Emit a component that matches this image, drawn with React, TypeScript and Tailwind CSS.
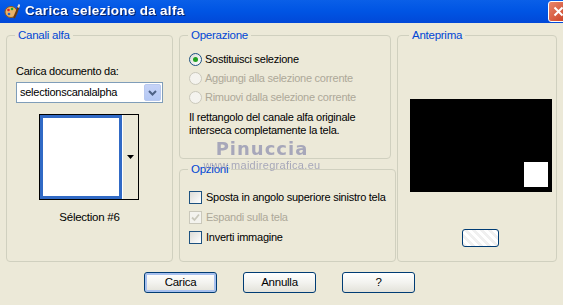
import type { ReactNode } from 'react';

const font = { fontFamily: '"Liberation Sans", Arial, sans-serif' };

function Group({ title, className, children }: { title: string; className?: string; children: ReactNode }) {
  return (
    <fieldset className={`border border-[#d0d0bf] rounded-[4px] px-[9px] ${className ?? ''}`}>
      <legend className="px-[3px] text-[#0046d5] text-[11.5px] leading-[13px] ml-[-1px]">{title}</legend>
      {children}
    </fieldset>
  );
}

function Radio({ label, checked, disabled }: { label: string; checked?: boolean; disabled?: boolean }) {
  return (
    <div className="flex items-center gap-[3px] h-[19px] whitespace-nowrap">
      <span
        className={`w-[13px] h-[13px] shrink-0 rounded-full border flex items-center justify-center ${
          disabled ? 'border-[#cac8bb] bg-[#f4f3ee]' : 'border-[#1c5180] bg-gradient-to-br from-[#dcdcd7] to-white'
        }`}
      >
        {checked && <span className="w-[5px] h-[5px] rounded-full bg-[#21a121]" />}
      </span>
      <span className={disabled ? 'text-[#aca899]' : 'text-black'}>{label}</span>
    </div>
  );
}

function Check({ label, checked, disabled }: { label: string; checked?: boolean; disabled?: boolean }) {
  return (
    <div className="flex items-center gap-[4px] h-[20px] whitespace-nowrap">
      <span
        className={`w-[13px] h-[13px] shrink-0 border flex items-center justify-center ${
          disabled ? 'border-[#cac8bb] bg-[#f4f3ee]' : 'border-[#1c5180] bg-gradient-to-br from-[#dcdcd7] to-white'
        }`}
      >
        {checked && (
          <svg width="9" height="9" viewBox="0 0 9 9">
            <path d="M1 4.5 L3.5 7 L8 1.5" fill="none" stroke="#cac8bb" strokeWidth="1.8" />
          </svg>
        )}
      </span>
      <span className={disabled ? 'text-[#aca899]' : 'text-black'}>{label}</span>
    </div>
  );
}

function Btn({ children, focused }: { children: ReactNode; focused?: boolean }) {
  return (
    <button
      className={`w-[73px] h-[21px] rounded-[3px] border border-[#003c74] bg-gradient-to-b from-white via-[#f3f3ef] to-[#e3e2da] text-[11.5px] text-black ${
        focused ? 'shadow-[inset_0_0_0_2px_#a7c0ee]' : ''
      }`}
    >
      {children}
    </button>
  );
}

export default function App() {
  return (
    <div className="w-[563px] h-[305px] bg-[#ece9d8] overflow-hidden text-[11px] tracking-[-0.25px] relative" style={font}>
      {/* Title bar */}
      <div className="h-[23px] bg-gradient-to-b from-[#0a5fe8] via-[#0054e3] to-[#0148d8] flex items-center pl-[4px] relative">
        <svg width="16" height="16" viewBox="0 0 16 16" className="mr-[5px]">
          <ellipse cx="7" cy="8" rx="6" ry="5.5" fill="#e9b36a" stroke="#8a5a1e" strokeWidth="1" />
          <circle cx="4.5" cy="6" r="1.3" fill="#d22" />
          <circle cx="8" cy="5" r="1.3" fill="#2a2" />
          <circle cx="5" cy="10" r="1.3" fill="#26c" />
          <path d="M10 14 L15 2" stroke="#6b3a12" strokeWidth="2" />
          <path d="M14.2 3.5 L15.5 0.5" stroke="#ddd" strokeWidth="2" />
        </svg>
        <span className="text-white font-bold text-[13.5px] tracking-[0.3px] drop-shadow-[1px_1px_0_#0a246a]">
          Carica selezione da alfa
        </span>
        <div className="absolute right-[-6px] top-[1px] w-[21px] h-[21px] rounded-[3px] border border-white bg-gradient-to-br from-[#e8856b] to-[#c8391b] flex items-center justify-center">
          <svg width="11" height="11" viewBox="0 0 11 11">
            <path d="M1.5 1.5 L9.5 9.5 M9.5 1.5 L1.5 9.5" stroke="white" strokeWidth="2" />
          </svg>
        </div>
      </div>

      {/* Body */}
      <div className="flex gap-[6px] pl-[6px] pr-[6px] pt-[6px]">
        <Group title="Canali alfa" className="w-[168px] h-[233px] pt-[22px]">
          <div className="leading-[14px]">Carica documento da:</div>
          <div className="mt-[4px] h-[21px] border border-[#7f9db9] bg-white flex items-center">
            <span className="flex-1 pl-[3px]">selectionscanalalpha</span>
            <span className="w-[17px] h-[17px] mr-[1px] rounded-[2px] bg-gradient-to-b from-[#c6d3f7] to-[#b4c8f4] border border-[#b9c9ef] flex items-center justify-center">
              <svg width="9" height="6" viewBox="0 0 9 6">
                <path d="M1 1 L4.5 4.5 L8 1" fill="none" stroke="#4d6185" strokeWidth="2" />
              </svg>
            </span>
          </div>
          <div className="flex justify-center mt-[11px]">
            <div className="flex border border-black bg-white">
              <div className="w-[82px] h-[84px] border-[3px] border-[#316ac5] bg-white" />
              <div className="w-[16px] h-[84px] bg-[#ece9d8] border-l border-white flex items-center justify-center">
                <svg width="7" height="4" viewBox="0 0 7 4">
                  <path d="M0 0 L7 0 L3.5 4 Z" fill="black" />
                </svg>
              </div>
            </div>
          </div>
          <div className="text-center mt-[9px] text-[11.5px]">Sélection #6</div>
        </Group>

        <div className="w-[212px] flex flex-col gap-[4px]">
          <Group title="Operazione" className="h-[130px] pt-[8px]">
            <Radio label="Sostituisci selezione" checked />
            <Radio label="Aggiungi alla selezione corrente" disabled />
            <Radio label="Rimuovi dalla selezione corrente" disabled />
            <div className="mt-[4px] leading-[13px] whitespace-nowrap">
              Il rettangolo del canale alfa originale
              <br />
              interseca completamente la tela.
            </div>
          </Group>
          <Group title="Opzioni" className="h-[99px] pt-[11px]">
            <Check label="Sposta in angolo superiore sinistro tela" />
            <Check label="Espandi sulla tela" checked disabled />
            <Check label="Inverti immagine" />
          </Group>
        </div>

        <Group title="Anteprima" className="w-[161px] h-[233px] pt-[57px] pl-[12px] pr-[4px]">
          <div className="h-[93px] bg-black flex items-end justify-end pr-[4px] pb-[5px]">
            <div className="w-[24px] h-[25px] bg-white" />
          </div>
          <div className="flex justify-center mt-[37px]">
            <div className="w-[37px] h-[18px] rounded-[3px] border border-[#003c74] bg-[linear-gradient(45deg,#f0f0f0_25%,#ffffff_25%,#ffffff_50%,#f0f0f0_50%,#f0f0f0_75%,#ffffff_75%)] bg-[length:8px_8px]" />
          </div>
        </Group>
      </div>

      <div className="flex justify-center gap-[26px] mt-[10px] pr-[4px]">
        <Btn focused>Carica</Btn>
        <Btn>Annulla</Btn>
        <Btn>?</Btn>
      </div>

      {/* Watermark */}
      <div className="absolute left-[200px] top-[139px] w-[124px] pointer-events-none text-center text-[#9092b0] opacity-75 tracking-normal">
        <div className="text-[18px] leading-[20px] font-bold tracking-[1px]" style={{ fontFamily: '"DejaVu Sans", sans-serif' }}>
          Pinuccia
        </div>
        <div className="text-[11px] leading-[12px] tracking-[0.3px]">www.maidiregrafica.eu</div>
      </div>
    </div>
  );
}
